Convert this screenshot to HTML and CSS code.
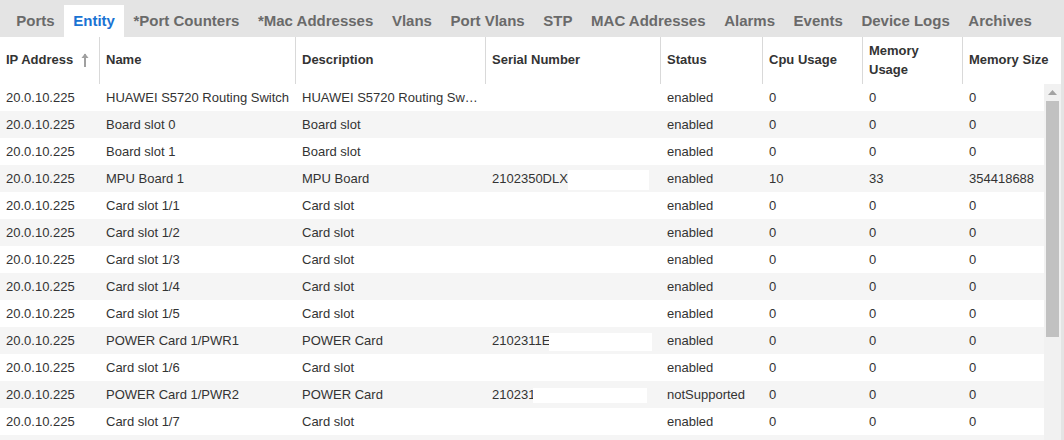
FILE: index.html
```html
<!DOCTYPE html>
<html>
<head>
<meta charset="utf-8">
<link rel="stylesheet" href="styles.css">
</head>
<body>
<div class="page">
  <nav class="tabs">
    <div class="tab">Ports</div>
    <div class="tab active">Entity</div>
    <div class="tab">*Port Counters</div>
    <div class="tab">*Mac Addresses</div>
    <div class="tab">Vlans</div>
    <div class="tab">Port Vlans</div>
    <div class="tab">STP</div>
    <div class="tab">MAC Addresses</div>
    <div class="tab">Alarms</div>
    <div class="tab">Events</div>
    <div class="tab">Device Logs</div>
    <div class="tab">Archives</div>
  </nav>
  <div class="grid">
    <div class="head row">
      <div class="cell">IP Address <svg class="sort" width="8" height="14" viewBox="0 0 8 14"><path d="M4 1 L4 14" stroke="#a0a0a0" stroke-width="2"/><path d="M0.5 5 L4 0.5 L7.5 5 Z" fill="#a0a0a0"/></svg></div>
      <div class="cell">Name</div>
      <div class="cell">Description</div>
      <div class="cell">Serial Number</div>
      <div class="cell">Status</div>
      <div class="cell">Cpu Usage</div>
      <div class="cell">Memory Usage</div>
      <div class="cell">Memory Size</div>
    </div>
    <div class="bodywrap">
      <div class="rows">
        <div class="row"><div class="cell">20.0.10.225</div><div class="cell">HUAWEI S5720 Routing Switch</div><div class="cell">HUAWEI S5720 Routing Switch</div><div class="cell"></div><div class="cell">enabled</div><div class="cell">0</div><div class="cell">0</div><div class="cell">0</div></div>
        <div class="row"><div class="cell">20.0.10.225</div><div class="cell">Board slot 0</div><div class="cell">Board slot</div><div class="cell"></div><div class="cell">enabled</div><div class="cell">0</div><div class="cell">0</div><div class="cell">0</div></div>
        <div class="row"><div class="cell">20.0.10.225</div><div class="cell">Board slot 1</div><div class="cell">Board slot</div><div class="cell"></div><div class="cell">enabled</div><div class="cell">0</div><div class="cell">0</div><div class="cell">0</div></div>
        <div class="row"><div class="cell">20.0.10.225</div><div class="cell">MPU Board 1</div><div class="cell">MPU Board</div><div class="cell">2102350DLX<span class="mask m1"></span></div><div class="cell">enabled</div><div class="cell">10</div><div class="cell">33</div><div class="cell">354418688</div></div>
        <div class="row"><div class="cell">20.0.10.225</div><div class="cell">Card slot 1/1</div><div class="cell">Card slot</div><div class="cell"></div><div class="cell">enabled</div><div class="cell">0</div><div class="cell">0</div><div class="cell">0</div></div>
        <div class="row"><div class="cell">20.0.10.225</div><div class="cell">Card slot 1/2</div><div class="cell">Card slot</div><div class="cell"></div><div class="cell">enabled</div><div class="cell">0</div><div class="cell">0</div><div class="cell">0</div></div>
        <div class="row"><div class="cell">20.0.10.225</div><div class="cell">Card slot 1/3</div><div class="cell">Card slot</div><div class="cell"></div><div class="cell">enabled</div><div class="cell">0</div><div class="cell">0</div><div class="cell">0</div></div>
        <div class="row"><div class="cell">20.0.10.225</div><div class="cell">Card slot 1/4</div><div class="cell">Card slot</div><div class="cell"></div><div class="cell">enabled</div><div class="cell">0</div><div class="cell">0</div><div class="cell">0</div></div>
        <div class="row"><div class="cell">20.0.10.225</div><div class="cell">Card slot 1/5</div><div class="cell">Card slot</div><div class="cell"></div><div class="cell">enabled</div><div class="cell">0</div><div class="cell">0</div><div class="cell">0</div></div>
        <div class="row"><div class="cell">20.0.10.225</div><div class="cell">POWER Card 1/PWR1</div><div class="cell">POWER Card</div><div class="cell">2102311E<span class="mask m2"></span></div><div class="cell">enabled</div><div class="cell">0</div><div class="cell">0</div><div class="cell">0</div></div>
        <div class="row"><div class="cell">20.0.10.225</div><div class="cell">Card slot 1/6</div><div class="cell">Card slot</div><div class="cell"></div><div class="cell">enabled</div><div class="cell">0</div><div class="cell">0</div><div class="cell">0</div></div>
        <div class="row"><div class="cell">20.0.10.225</div><div class="cell">POWER Card 1/PWR2</div><div class="cell">POWER Card</div><div class="cell">210231<span class="mask m3"></span></div><div class="cell">notSupported</div><div class="cell">0</div><div class="cell">0</div><div class="cell">0</div></div>
        <div class="row"><div class="cell">20.0.10.225</div><div class="cell">Card slot 1/7</div><div class="cell">Card slot</div><div class="cell"></div><div class="cell">enabled</div><div class="cell">0</div><div class="cell">0</div><div class="cell">0</div></div>
        <div class="row"></div>
      </div>
      <div class="scrollbar">
        <div class="sb-btn"><svg width="9" height="5" viewBox="0 0 9 5"><path d="M0 5 L4.5 0 L9 5 Z" fill="#a3a3a3"/></svg></div>
        <div class="sb-thumb"></div>
      </div>
    </div>
  </div>
</div>
</body>
</html>
```
FILE: styles.css
```css
* { box-sizing: border-box; }
html, body {
  margin: 0;
  padding: 0;
  background: #e4e4e4;
  font-family: "Liberation Sans", Arial, sans-serif;
  color: #333;
  overflow: hidden;
}
.page {
  width: 1064px;
  height: 440px;
  display: flex;
  flex-direction: column;
}
.tabs {
  height: 37px;
  display: flex;
  align-items: flex-end;
  padding-left: 7px;
  background: #e4e4e4;
}
.tab {
  height: 32px;
  line-height: 31px;
  padding: 0 9.3px;
  font-size: 15px;
  font-weight: bold;
  color: #6a6a6a;
  white-space: nowrap;
}
.tab.active {
  background: #fff;
  color: #1a73d3;
}
.grid {
  width: 1061px;
  flex: 1;
  display: flex;
  flex-direction: column;
  min-height: 0;
}
.row {
  display: grid;
  grid-template-columns: 99px 196px 190px 175px 102px 100px 100px 1fr;
  height: 27px;
  font-size: 13px;
}
.rows .row { background: #fff; }
.rows .row:nth-child(even) { background: #f5f5f5; }
.cell {
  padding: 0 2px 0 7px;
  line-height: 27px;
  white-space: nowrap;
  overflow: hidden;
  text-overflow: ellipsis;
}
.rows .cell:nth-child(3) { padding-right: 6px; }
.row .cell:first-child { padding-left: 6px; }
.head {
  height: 47px;
  background: #fff;
  font-weight: bold;
}
.head .cell {
  display: flex;
  align-items: center;
  line-height: 19px;
  white-space: normal;
  padding-bottom: 2px;
}
.head .cell + .cell { border-left: 1px solid #d9d9d9; padding-left: 6px; }
.sort { margin-left: 8px; margin-top: 1px; }
.bodywrap {
  flex: 1;
  min-height: 0;
  display: flex;
  overflow: hidden;
}
.rows {
  flex: 1;
  min-width: 0;
}
.mask {
  display: inline-block;
  background: #fff;
  vertical-align: middle;
}
.m1 { width: 81px; height: 20px; }
.m2 { width: 103px; height: 18px; margin-left: -1px; }
.m3 { width: 114px; height: 15px; margin-left: -2px; }
.scrollbar {
  width: 17px;
  background: #f1f1f1;
  display: flex;
  flex-direction: column;
  align-items: center;
}
.sb-btn {
  height: 17px;
  width: 17px;
  display: flex;
  align-items: center;
  justify-content: center;
}
.sb-thumb {
  width: 13px;
  height: 236px;
  background: #c1c1c1;
}
```
